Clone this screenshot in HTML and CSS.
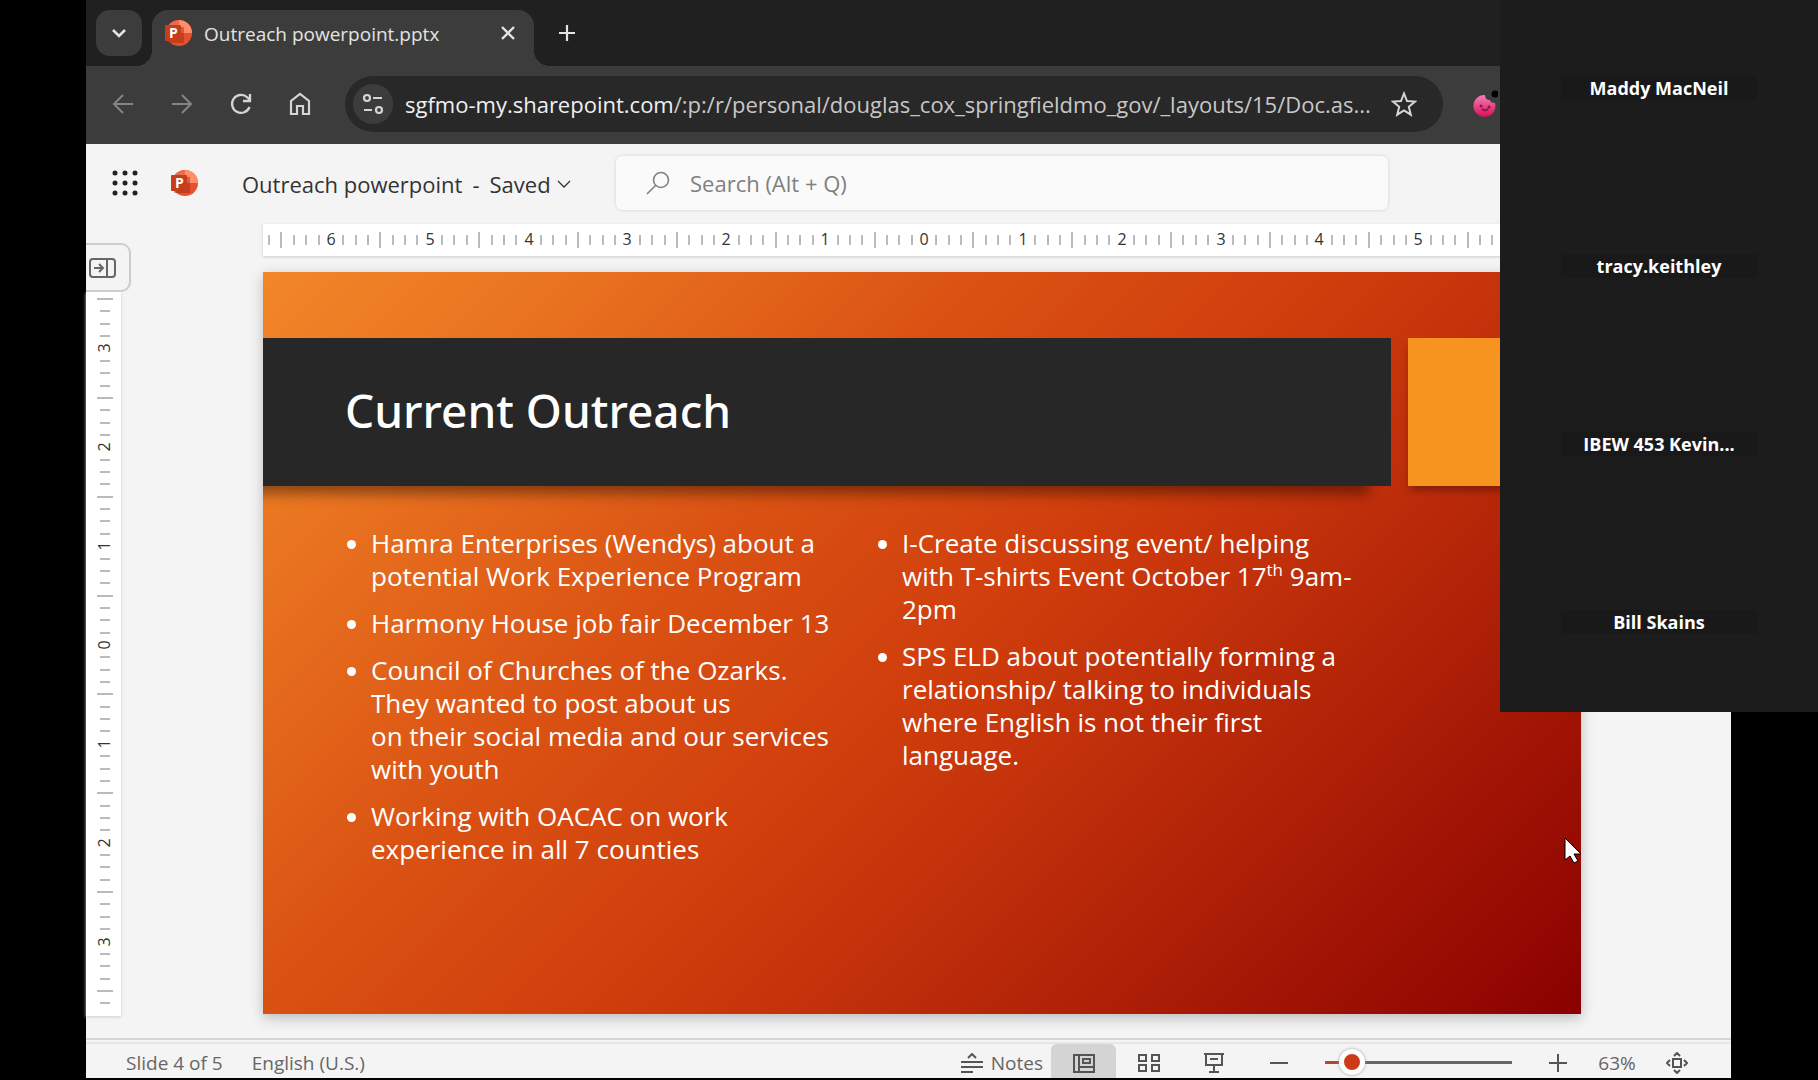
FILE: index.html
```html
<!DOCTYPE html>
<html lang="en">
<head>
  <meta charset="UTF-8">
  <title>Outreach powerpoint.pptx</title>
  <link rel="stylesheet" href="styles.css">
</head>
<body>
  <div class="window">
    <div class="tabs">
      <button class="tab-search" aria-label="Search tabs">
        <svg width="16" height="16" viewBox="0 0 16 16"><path d="M2 5l6 6 6-6" stroke-width="2.6"/></svg>
      </button>
      <div class="tab">
        <svg class="logo" width="28" height="28" viewBox="0 0 28 28">
          <g id="ppt">
            <circle cx="15" cy="14" r="13" fill="#e5502e"/>
            <path d="M15 1a13 13 0 0 1 13 13H15z" fill="#ff8f6b"/>
            <path d="M15 1v13H2A13 13 0 0 1 15 1z" fill="#ee6a49"/>
            <rect x="4" y="8" width="16" height="16" rx="1" fill="#a82c14" opacity=".5"/>
            <rect x="1" y="6" width="16" height="16" rx="1" fill="#c43e1c"/>
            <text x="5" y="19" class="ppt-letter">P</text>
          </g>
        </svg>
        <span class="tab-title">Outreach powerpoint.pptx</span>
        <button class="icon-btn" aria-label="Close tab">
          <svg width="16" height="16" viewBox="0 0 16 16"><path d="M2 2l12 12M14 2L2 14" stroke-width="2.4"/></svg>
        </button>
      </div>
      <button class="icon-btn new-tab" aria-label="New tab">
        <svg width="18" height="18" viewBox="0 0 18 18"><path d="M9 1v16M1 9h16" stroke-width="2.2"/></svg>
      </button>
    </div>

    <div class="toolbar">
      <button class="icon-btn dim" aria-label="Back">
        <svg width="24" height="24" viewBox="0 0 24 24"><path d="M22 12H3M12 3l-9 9 9 9" stroke-width="2"/></svg>
      </button>
      <button class="icon-btn dim" aria-label="Forward">
        <svg width="24" height="24" viewBox="0 0 24 24"><path d="M2 12h19M12 3l9 9-9 9" stroke-width="2"/></svg>
      </button>
      <button class="icon-btn" aria-label="Reload">
        <svg width="24" height="24" viewBox="0 0 24 24"><path d="M20.5 15a9 9 0 1 1-2-9.500L21 8M21 2v7h-7" stroke-width="2.3"/></svg>
      </button>
      <button class="icon-btn" aria-label="Home">
        <svg width="24" height="24" viewBox="0 0 24 24"><path d="M3 22V9l9-7 9 7v13h-6v-8H9v8z" stroke-width="2.2"/></svg>
      </button>
      <div class="address">
        <button class="site-info" aria-label="Site information">
          <svg width="22" height="22" viewBox="0 0 22 22"><g stroke-width="2.2"><circle cx="5" cy="5" r="3"/><path d="M11 5h9M2 17h8"/><circle cx="17" cy="17" r="3"/></g></svg>
        </button>
        <a class="url" href="#">sgfmo-my.sharepoint.com<span>/:p:/r/personal/douglas_cox_springfieldmo_gov/_layouts/15/Doc.as...</span></a>
        <button class="icon-btn" aria-label="Bookmark this tab">
          <svg width="26" height="26" viewBox="0 0 26 26"><path d="M13 2.5l3 7.500 8 .6-6.200 5.200 2 7.900L13 19.400l-6.800 4.300 2-7.900L2 10.600l8-.6z" stroke-width="2"/></svg>
        </button>
      </div>
      <svg class="cookie" width="28" height="28" viewBox="0 0 28 28">
        <defs><linearGradient id="pink" x2="0" y2="1"><stop stop-color="#f77fb6"/><stop offset="1" stop-color="#d80f58"/></linearGradient></defs>
        <path d="M15 5a11 11 0 1 0 10 8c-3 0-5-1-5-3-3 0-5-2-5-5z" fill="url(#pink)" stroke="none"/>
        <circle cx="11" cy="16" r="1.5" fill="#8c1546" stroke="none"/>
        <circle cx="19" cy="17" r="1.5" fill="#8c1546" stroke="none"/>
        <path d="M12 19q3 3 6 0" stroke="#8c1546" stroke-width="2"/>
        <circle cx="25" cy="4" r="3.5" fill="#000" stroke="none"/>
      </svg>
    </div>

    <header class="app-bar">
      <button class="icon-btn" aria-label="App launcher">
        <svg class="dots" width="26" height="26" viewBox="0 0 26 26">
          <circle cx="3" cy="3" r="2.5"/><circle cx="13" cy="3" r="2.5"/><circle cx="23" cy="3" r="2.5"/>
          <circle cx="3" cy="13" r="2.5"/><circle cx="13" cy="13" r="2.5"/><circle cx="23" cy="13" r="2.5"/>
          <circle cx="3" cy="23" r="2.5"/><circle cx="13" cy="23" r="2.5"/><circle cx="23" cy="23" r="2.5"/>
        </svg>
      </button>
      <svg class="logo" width="28" height="28" viewBox="0 0 28 28"><use href="#ppt"/></svg>
      <button class="doc-name">
        <span>Outreach powerpoint</span><span>-</span><span>Saved</span>
        <svg width="14" height="14" viewBox="0 0 14 14"><path d="M1 4l6 6 6-6" stroke-width="1.3"/></svg>
      </button>
      <label class="search">
        <svg width="24" height="24" viewBox="0 0 24 24"><circle cx="15" cy="9" r="7.5" stroke-width="1.6"/><path d="M9.5 14.5L1 23" stroke-width="1.6"/></svg>
        <input type="search" placeholder="Search (Alt + Q)" aria-label="Search">
      </label>
    </header>

    <main class="workspace">
      <div class="rail">
        <button class="expand" aria-label="Show thumbnails">
          <svg width="28" height="20" viewBox="0 0 28 20"><rect x="1" y="1" width="25" height="18" rx="3"/><path d="M18 1v18M5 10h9M10 6l4 4-4 4"/></svg>
        </button>
        <svg id="rulerV" class="ruler ruler-v" viewBox="0 0 35 724"></svg>
      </div>
      <div class="canvas">
        <svg id="rulerH" class="ruler ruler-h" viewBox="0 0 1318 32"></svg>
        <article class="slide">
          <div class="title-row">
            <h1>Current Outreach</h1>
            <div class="accent"></div>
          </div>
          <div class="columns">
            <ul>
              <li>Hamra Enterprises (Wendys) about a<br>potential Work Experience Program</li>
              <li>Harmony House job fair December 13</li>
              <li>Council of Churches of the Ozarks.<br>They wanted to post about us<br>on their social media and our services<br>with youth</li>
              <li>Working with OACAC on work<br>experience in all 7 counties</li>
            </ul>
            <ul>
              <li>I-Create discussing event/ helping<br>with T-shirts Event October 17<sup>th</sup> 9am-<br>2pm</li>
              <li>SPS ELD about potentially forming a<br>relationship/ talking to individuals<br>where English is not their first<br>language.</li>
            </ul>
          </div>
        </article>
      </div>
    </main>

    <footer class="status">
      <span>Slide 4 of 5</span>
      <button class="lang">English (U.S.)</button>
      <button class="notes">
        <svg width="22" height="20" viewBox="0 0 22 20"><path d="M0 9h22M0 14h22M0 19h12M7 5l4-4 4 4"/></svg>
        Notes
      </button>
      <button class="view active" aria-label="Normal view">
        <svg width="22" height="20" viewBox="0 0 22 20"><path d="M1 2h20v17H1zM6 2v17M6 14h15M10 6h7v4h-7z"/></svg>
      </button>
      <button class="view" aria-label="Slide sorter">
        <svg width="22" height="20" viewBox="0 0 22 20"><path d="M1 2h7v6H1zM14 2h7v6h-7zM1 12h7v6H1zM14 12h7v6h-7z"/></svg>
      </button>
      <button class="view" aria-label="Slide show">
        <svg width="22" height="20" viewBox="0 0 22 20"><path d="M1 1h20M3 1v11h16V1M7 6h8M11 12v7M6 19h10"/></svg>
      </button>
      <button class="view" aria-label="Zoom out">
        <svg width="20" height="20" viewBox="0 0 20 20"><path d="M1 10h18"/></svg>
      </button>
      <input class="zoom" type="range" min="50" max="200" value="63" aria-label="Zoom">
      <button class="view zoom-in" aria-label="Zoom in">
        <svg width="20" height="20" viewBox="0 0 20 20"><path d="M1 10h18M10 1v18"/></svg>
      </button>
      <button class="percent">63%</button>
      <button class="fit" aria-label="Fit to window">
        <svg width="22" height="22" viewBox="0 0 22 22"><path d="M7 7h8v8H7zM8 4l3-3 3 3M8 18l3 3 3-3M4 8l-3 3 3 3M18 8l3 3-3 3"/></svg>
      </button>
    </footer>
  </div>

  <svg class="cursor" width="20" height="28" viewBox="0 0 20 28"><path d="M1 1v22l5-4 4 7 4-2-4-7h7z" fill="#fff" stroke="#000" stroke-width="1"/></svg>

  <aside class="participants">
    <div class="tile"><span>Maddy MacNeil</span></div>
    <div class="tile"><span>tracy.keithley</span></div>
    <div class="tile"><span>IBEW 453 Kevin...</span></div>
    <div class="tile"><span>Bill Skains</span></div>
  </aside>

  <script>
    const INCH = 98.85;

    // one tick per eighth of an inch, a long one on the half, a number on the whole
    function drawRuler(id, zero, from, to, vertical) {
      let out = '';
      for (let i = from; i <= to; i++) {
        const p = Math.round(zero + i * INCH / 8);
        if (i % 8 === 0) {
          const n = Math.abs(i / 8);
          out += vertical
            ? `<text transform="translate(24 ${p}) rotate(-90)">${n}</text>`
            : `<text x="${p}" y="21">${n}</text>`;
        } else {
          const r = i % 4 === 0 ? 8 : 5;
          out += vertical
            ? `<path d="M${19 - r} ${p}h${2 * r}"/>`
            : `<path d="M${p} ${16 - r}v${2 * r}"/>`;
        }
      }
      document.getElementById(id).innerHTML = out;
    }

    drawRuler('rulerH', 661, -53, 53, false);
    drawRuler('rulerV', 353, -28, 29, true);
  </script>
</body>
</html>
```
FILE: styles.css
```css
* { box-sizing: border-box; }
body { margin: 0; background: #000; font-family: "Open Sans", sans-serif; overflow: hidden; }
button { border: 0; padding: 0; background: none; color: inherit; font: inherit; display: flex; align-items: center; justify-content: center; flex: none; }
svg { fill: none; stroke: currentColor; flex: none; display: block; }
.ppt-letter { font: bold 14px "Open Sans", sans-serif; fill: #fff; stroke: none; }
.logo { stroke: none; }
.icon-btn { width: 28px; height: 28px; }

.window { height: calc(100vh - 2px); margin: 0 87px 2px 86px; display: flex; flex-direction: column; background: #f4f4f4; }

/* browser */
.tabs { display: flex; height: 66px; padding: 10px 10px 0; background: #202020; color: #e3e3e3; }
.tab-search { width: 46px; height: 46px; border-radius: 14px; background: #3c3c3c; margin-right: 10px; }
.tab { position: relative; width: 382px; display: flex; align-items: center; padding: 0 12px 10px; border-radius: 16px 16px 0 0; background: #3c3c3c; }
.tab::before, .tab::after { content: ""; position: absolute; bottom: 0; width: 16px; height: 16px; }
.tab::before { right: 100%; background: radial-gradient(circle at 0 0, transparent 16px, #3c3c3c 16px); }
.tab::after { left: 100%; background: radial-gradient(circle at 100% 0, transparent 16px, #3c3c3c 16px); }
.tab-title { flex: 1; margin-left: 12px; padding-top: 2px; font-size: 19px; white-space: nowrap; }
.new-tab { margin: 9px 0 0 19px; }

.toolbar { display: flex; align-items: center; height: 78px; padding: 0 0 2px 23px; background: #3c3c3c; color: #d5d5d5; }
.toolbar > .icon-btn { margin-right: 31px; }
.dim { color: #858585; }
.address { width: 1098px; height: 56px; display: flex; align-items: center; padding: 0 25px 0 8px; border-radius: 28px; background: #282828; }
.site-info { width: 40px; height: 40px; border-radius: 50%; background: #3c3c3c; }
.url { flex: 1; margin-left: 12px; color: #f0f0f0; font-size: 22px; text-decoration: none; white-space: nowrap; }
.url span { color: #c7c7c7; }
.cookie { margin-left: 27px; }

/* app header */
.app-bar { display: flex; align-items: center; height: 78px; padding-left: 25px; color: #333; }
.app-bar .logo { margin-left: 31px; }
.dots { fill: #222; stroke: none; }
.doc-name { width: 330px; justify-content: flex-start; gap: 10px; margin-left: 44px; padding-top: 2px; font-size: 22px; white-space: nowrap; }
.doc-name svg { margin-left: -4px; }
.search { width: 772px; height: 54px; display: flex; align-items: center; padding-left: 30px; margin-left: 44px; border-radius: 6px; background: #fafafa; box-shadow: 0 0 3px #ccc; color: #808080; }
.search input { flex: 1; border: 0; outline: 0; background: none; margin-left: 20px; padding: 0; font: inherit; font-size: 22px; }
.search input::placeholder { color: #808080; opacity: 1; }

/* editing area */
.workspace { flex: 1; min-height: 0; display: flex; }
.rail { width: 35px; padding-top: 21px; }
.expand { position: relative; width: 45px; height: 49px; padding-right: 9px; border: 2px solid #ccc; border-left: 0; border-radius: 0 10px 10px 0; background: #f4f4f4; color: #666; }
.expand svg { stroke-width: 2; }
.ruler { background: #fff; stroke: #777; box-shadow: 0 1px 3px #ccc; }
.ruler text { font-size: 16px; fill: #333; stroke: none; text-anchor: middle; }
.ruler-v { width: 35px; }
.ruler-h { width: 100%; }
.canvas { flex: 1; padding: 2px 150px 0 142px; }

.slide { aspect-ratio: 1318 / 742; margin-top: 16px; padding-top: 66px; overflow: hidden; color: #fff; background: linear-gradient(135deg, #f38629 0%, #e97320 15%, #da5213 35%, #cf3c0c 53%, #bd2d0a 66%, #8a0000 100%); box-shadow: 0 4px 12px #bbb; }
.title-row { display: flex; gap: 17px; height: 148px; }
.title-row h1 { width: 1128px; margin: 0; padding-left: 82px; background: #272727; font-family: "Noto Sans", sans-serif; font-size: 46px; font-weight: 500; line-height: 144px; box-shadow: -18px 12px 12px -4px #0006; }
.accent { flex: 1; background: #f7941f; box-shadow: 0 6px 8px -2px #0005; }
.columns { display: flex; padding: 41px 0 0 82px; font-size: 26px; font-weight: 500; line-height: 33px; }
.columns ul { width: 531px; margin: 0; padding: 0; list-style: none; }
.columns li { position: relative; padding-left: 26px; margin-bottom: 14px; white-space: nowrap; }
.columns li::before { content: ""; position: absolute; left: 2px; top: 13px; width: 9px; height: 9px; border-radius: 50%; background: #fff; }
.columns sup { font-size: 17px; line-height: 0; }

/* status bar */
.status { display: flex; align-items: center; height: 40px; padding: 4px 43px 0 40px; border-top: 2px solid #d6d6d6; box-shadow: inset 0 2px #f4f4f4, inset 0 4px #e6e6e6; color: #666; font-size: 19px; white-space: nowrap; }
.status > * { height: 34px; padding-top: 4px; }
.status > span { line-height: 30px; }
.status svg { stroke-width: 2; color: #555; }
.lang { margin-left: 29px; }
.notes { gap: 8px; margin-left: auto; }
.view { width: 65px; }
.active { background: #d4d4d4; border-radius: 6px 6px 0 0; margin-left: 8px; }
.status .zoom { appearance: none; width: 187px; height: 26px; padding: 0; margin: 2px 0 0 14px; background: linear-gradient(to right, #b7472a 26px, #666 26px) center / 100% 3px no-repeat; }
.zoom::-webkit-slider-thumb { appearance: none; width: 26px; height: 26px; border: 5px solid #fff; border-radius: 50%; background: #cb3b17; box-shadow: 0 0 3px #999; }
.zoom-in { margin-left: 13px; }
.percent { width: 54px; }
.fit { margin-left: 22px; }

.cursor { position: absolute; left: 1564px; top: 837px; }

/* call participants, over the shared screen */
.participants { position: absolute; top: 0; right: 0; width: 318px; background: #1c1c1c; color: #fff; }
.tile { height: 178px; display: flex; align-items: center; justify-content: center; padding-bottom: 2px; }
.tile span { width: 196px; background: #191919; text-align: center; font-size: 18px; font-weight: 700; line-height: 24px; }
```
